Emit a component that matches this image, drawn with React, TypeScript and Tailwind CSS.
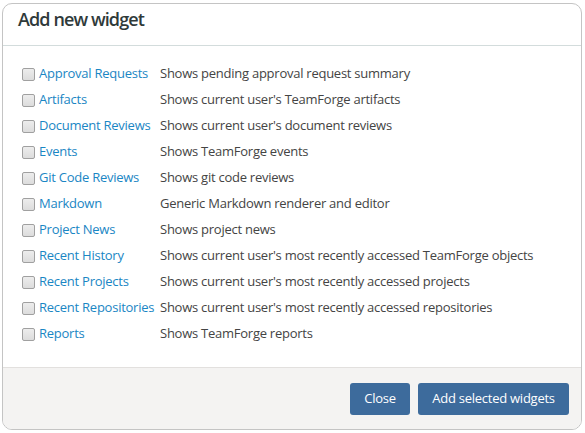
const widgets: [string, string][] = [
  ["Approval Requests", "Shows pending approval request summary"],
  ["Artifacts", "Shows current user's TeamForge artifacts"],
  ["Document Reviews", "Shows current user's document reviews"],
  ["Events", "Shows TeamForge events"],
  ["Git Code Reviews", "Shows git code reviews"],
  ["Markdown", "Generic Markdown renderer and editor"],
  ["Project News", "Shows project news"],
  ["Recent History", "Shows current user's most recently accessed TeamForge objects"],
  ["Recent Projects", "Shows current user's most recently accessed projects"],
  ["Recent Repositories", "Shows current user's most recently accessed repositories"],
  ["Reports", "Shows TeamForge reports"],
];

export default function App() {
  return (
    <div className="w-[585px] h-[433px] bg-white pt-[3px] pl-[2px]" style={{ fontFamily: '"Open Sans", sans-serif' }}>
      <div className="w-[580px] h-[427px] border border-[#c4c4c4] rounded-[10px] flex flex-col overflow-hidden">
        {/* Header */}
        <div className="h-[42px] border-b border-[#d3dcdc] pl-[15px] pt-[3px]">
          <h1 className="text-[18px] leading-[24px] font-semibold text-[#2f3a3a] tracking-[-0.9px]">Add new widget</h1>
        </div>

        {/* Body */}
        <div className="flex-1 pt-[15px] pl-[19px]">
          {widgets.map(([name, desc]) => (
            <div key={name} className="h-[26px] flex items-center text-[13px] tracking-[-0.25px]">
              <span className="w-[13px] h-[13px] rounded-[2px] border border-[#a0a0a0] bg-gradient-to-b from-[#ededed] to-[#dcdcdc] mr-[4px]" />
              <a className="w-[121px] text-[#1a86c4] whitespace-nowrap">{name}</a>
              <span className="text-[#444]">{desc}</span>
            </div>
          ))}
        </div>

        {/* Footer */}
        <div className="h-[62px] bg-[#f4f3f2] border-t border-[#e2e0de] flex items-center justify-end gap-[8px] pr-[12px]">
          <button className="h-[32px] w-[60px] rounded-[3px] bg-[#3d6b9c] text-white text-[13px] font-medium tracking-[-0.25px]">Close</button>
          <button className="h-[32px] w-[151px] rounded-[3px] bg-[#3d6b9c] text-white text-[13px] font-medium tracking-[-0.25px]">Add selected widgets</button>
        </div>
      </div>
    </div>
  );
}
